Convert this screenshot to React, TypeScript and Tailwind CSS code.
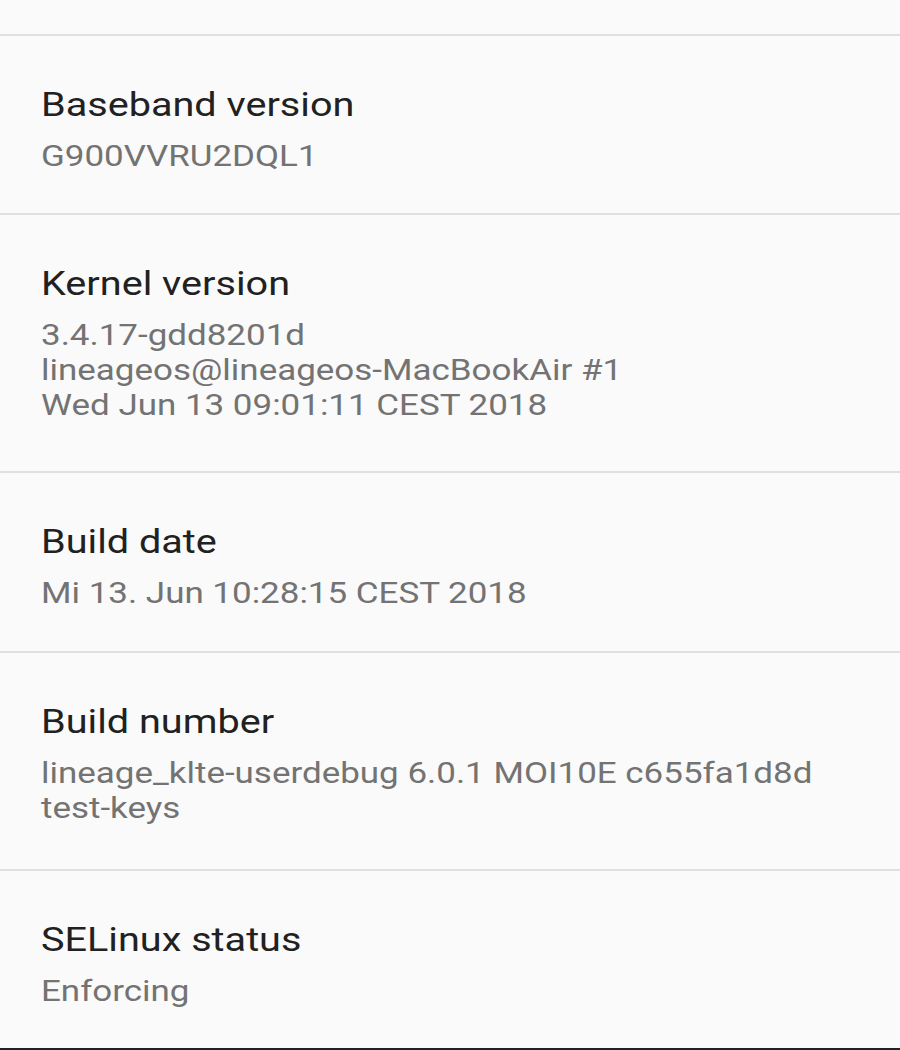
import React from 'react';

interface InfoRow {
  title: string;
  lines: string[];
  pb: string;
}

const rows: InfoRow[] = [
  { title: 'Baseband version', lines: ['G900VVRU2DQL1'], pb: 'pb-[40px]' },
  {
    title: 'Kernel version',
    lines: ['3.4.17-gdd8201d', 'lineageos@lineageos-MacBookAir #1', 'Wed Jun 13 09:01:11 CEST 2018'],
    pb: 'pb-[49px]',
  },
  { title: 'Build date', lines: ['Mi 13. Jun 10:28:15 CEST 2018'], pb: 'pb-[41px]' },
  { title: 'Build number', lines: ['lineage_klte-userdebug 6.0.1 MOI10E c655fa1d8d', 'test-keys'], pb: 'pb-[44px]' },
  { title: 'SELinux status', lines: ['Enforcing'], pb: 'pb-[40px]' },
];

function Preference({ row, last }: { row: InfoRow; last: boolean }) {
  return (
    <div
      className={`border-t-2 border-[#e0e0e0] pl-[41px] pr-6 pt-[48px] ${row.pb} ${
        last ? 'border-b-2 border-b-[#222222]' : ''
      }`}
    >
      <div className="origin-left scale-x-[1.165] whitespace-nowrap text-[34px] leading-[40px] text-[#212121]">
        {row.title}
      </div>
      <div className="mt-[14px] origin-left scale-x-[1.165] whitespace-nowrap text-[30px] leading-[35px] text-[#737373]">
        {row.lines.map((line) => (
          <div key={line}>{line}</div>
        ))}
      </div>
    </div>
  );
}

export default function App() {
  return (
    <div className="min-h-[1050px] w-full overflow-hidden bg-[#fafafa]" style={{ fontFamily: 'Roboto, "Noto Sans", sans-serif' }}>
      <div className="h-[34px]" />
      {rows.map((row, i) => (
        <Preference key={row.title} row={row} last={i === rows.length - 1} />
      ))}
    </div>
  );
}
